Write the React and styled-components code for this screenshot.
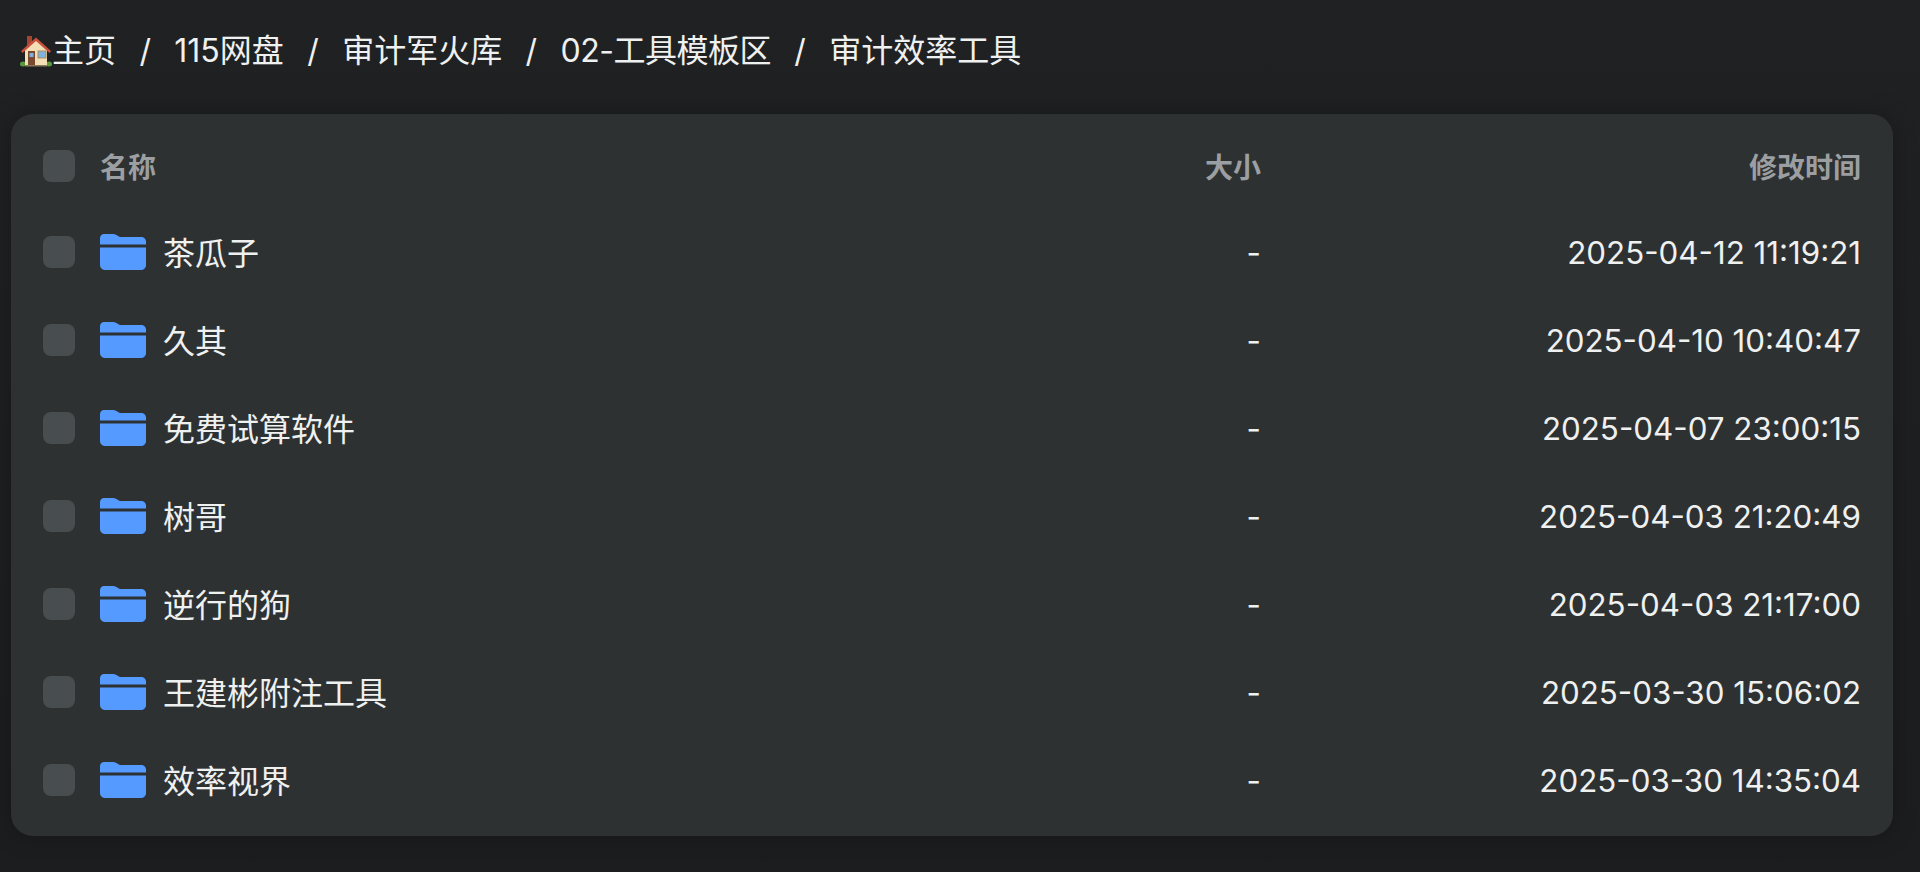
import React from 'react';
import styled, { createGlobalStyle } from 'styled-components';

const FONT = `Inter, "Noto Sans CJK SC", sans-serif`;

const GlobalStyle = createGlobalStyle`
  html, body {
    margin: 0;
    height: 100%;
    background: #1c1e1f;
  }
  #root {
    height: 100%;
  }
`;

const Page = styled.div`
  box-sizing: border-box;
  height: 872px;
  overflow: hidden;
  padding: 0 27px 0 11px;
  background: linear-gradient(180deg, #202123 0%, #1b1d1e 100%);
  font-family: ${FONT};
  color: #eff0f0;
`;

const Breadcrumb = styled.nav`
  display: flex;
  align-items: center;
  gap: 23.4px;
  height: 114px;
  padding: 0 0 12px 9px;
  box-sizing: border-box;
  font-size: 32px;
`;

const Crumb = styled.span`
  display: flex;
  align-items: center;
  line-height: 40px;
  letter-spacing: ${(p) => p.$spacing || 0}px;
`;

const Separator = styled.span`
  font-size: 32px;
  line-height: 40px;
`;

const Card = styled.section`
  box-sizing: border-box;
  height: 722px;
  padding: 9px 32px 12px 32px;
  border-radius: 22px;
  background: #2e3132;
  box-shadow: 0 0 24px rgba(0, 0, 0, 0.25);
`;

const Row = styled.div`
  display: grid;
  grid-template-columns: 32px 1fr 200px 600px;
  align-items: center;
  height: ${(p) => p.$height || 88}px;
`;

const Checkbox = styled.span`
  display: block;
  width: 32px;
  height: 32px;
  border-radius: 8px;
  background: #484d50;
`;

const NameCell = styled.div`
  display: flex;
  align-items: center;
  gap: 17px;
  margin-left: 25px;
  font-size: 32px;
`;

const NameText = styled.span`
  margin-top: -2px;
`;

const HeaderLabel = styled.div`
  font-size: 28px;
  font-weight: 600;
  color: #9c9fa1;
  text-align: ${(p) => p.$align || 'left'};
  margin-left: ${(p) => p.$indent || 0}px;
`;

const Cell = styled.div`
  padding-top: 2px;
  font-size: 31.3px;
  text-align: right;
  white-space: nowrap;
`;

const HouseIcon = () => (
  <svg width="32" height="32" viewBox="0 0 32 32">
    <ellipse cx="3" cy="29" rx="3" ry="2.5" fill="#5b9a3c" />
    <ellipse cx="29" cy="29" rx="3" ry="2.5" fill="#5b9a3c" />
    <rect x="7" y="1" width="5" height="9" fill="#a5452f" />
    <path d="M5 14 L16 4 L27 14 V31 H5 Z" fill="#f3dfb6" />
    <path d="M1 16 L16 2.5 L31 16 L29.5 18 L16 6 L2.5 18 Z" fill="#c9503c" />
    <rect x="8" y="16" width="7" height="15" fill="#7a4a30" />
    <rect x="9.5" y="18" width="4" height="4" fill="#7fb2dc" />
    <rect x="18" y="16" width="8" height="7" fill="#7fb2dc" stroke="#a98f62" strokeWidth="1" />
    <rect x="5" y="30" width="22" height="1.5" fill="#8a7a5c" />
  </svg>
);

const FolderIcon = () => (
  <svg width="46" height="36" viewBox="0 0 46 36">
    <path
      d="M0 10.5 V4 C0 1.8 1.8 0 4 0 H13 C15.5 0 16.5 1 18 2 C19 2.7 20 3 21.5 3 H41 C43.8 3 46 5 46 7.6 V10.5 Z"
      fill="#559bff"
    />
    <path
      d="M0 13.5 H46 V31 C46 33.8 43.8 36 41 36 H5 C2.2 36 0 33.8 0 31 Z"
      fill="#559bff"
    />
  </svg>
);

const crumbs = [
  { label: '115网盘' },
  { label: '审计军火库' },
  { label: '02-工具模板区', spacing: -0.5 },
  { label: '审计效率工具' },
];

const files = [
  { name: '茶瓜子', time: '2025-04-12 11:19:21' },
  { name: '久其', time: '2025-04-10 10:40:47' },
  { name: '免费试算软件', time: '2025-04-07 23:00:15' },
  { name: '树哥', time: '2025-04-03 21:20:49' },
  { name: '逆行的狗', time: '2025-04-03 21:17:00' },
  { name: '王建彬附注工具', time: '2025-03-30 15:06:02' },
  { name: '效率视界', time: '2025-03-30 14:35:04' },
];

export default function App() {
  return (
    <>
      <GlobalStyle />
      <Page>
        <Breadcrumb>
          <Crumb>
            <HouseIcon />
            主页
          </Crumb>
          {crumbs.map((c) => (
            <React.Fragment key={c.label}>
              <Separator>/</Separator>
              <Crumb $spacing={c.spacing}>{c.label}</Crumb>
            </React.Fragment>
          ))}
        </Breadcrumb>
        <Card>
          <Row $height={85}>
            <Checkbox />
            <HeaderLabel $indent={25}>名称</HeaderLabel>
            <HeaderLabel $align="right">大小</HeaderLabel>
            <HeaderLabel $align="right">修改时间</HeaderLabel>
          </Row>
          {files.map((f) => (
            <Row key={f.name}>
              <Checkbox />
              <NameCell>
                <FolderIcon />
                <NameText>{f.name}</NameText>
              </NameCell>
              <Cell>-</Cell>
              <Cell>{f.time}</Cell>
            </Row>
          ))}
        </Card>
      </Page>
    </>
  );
}
